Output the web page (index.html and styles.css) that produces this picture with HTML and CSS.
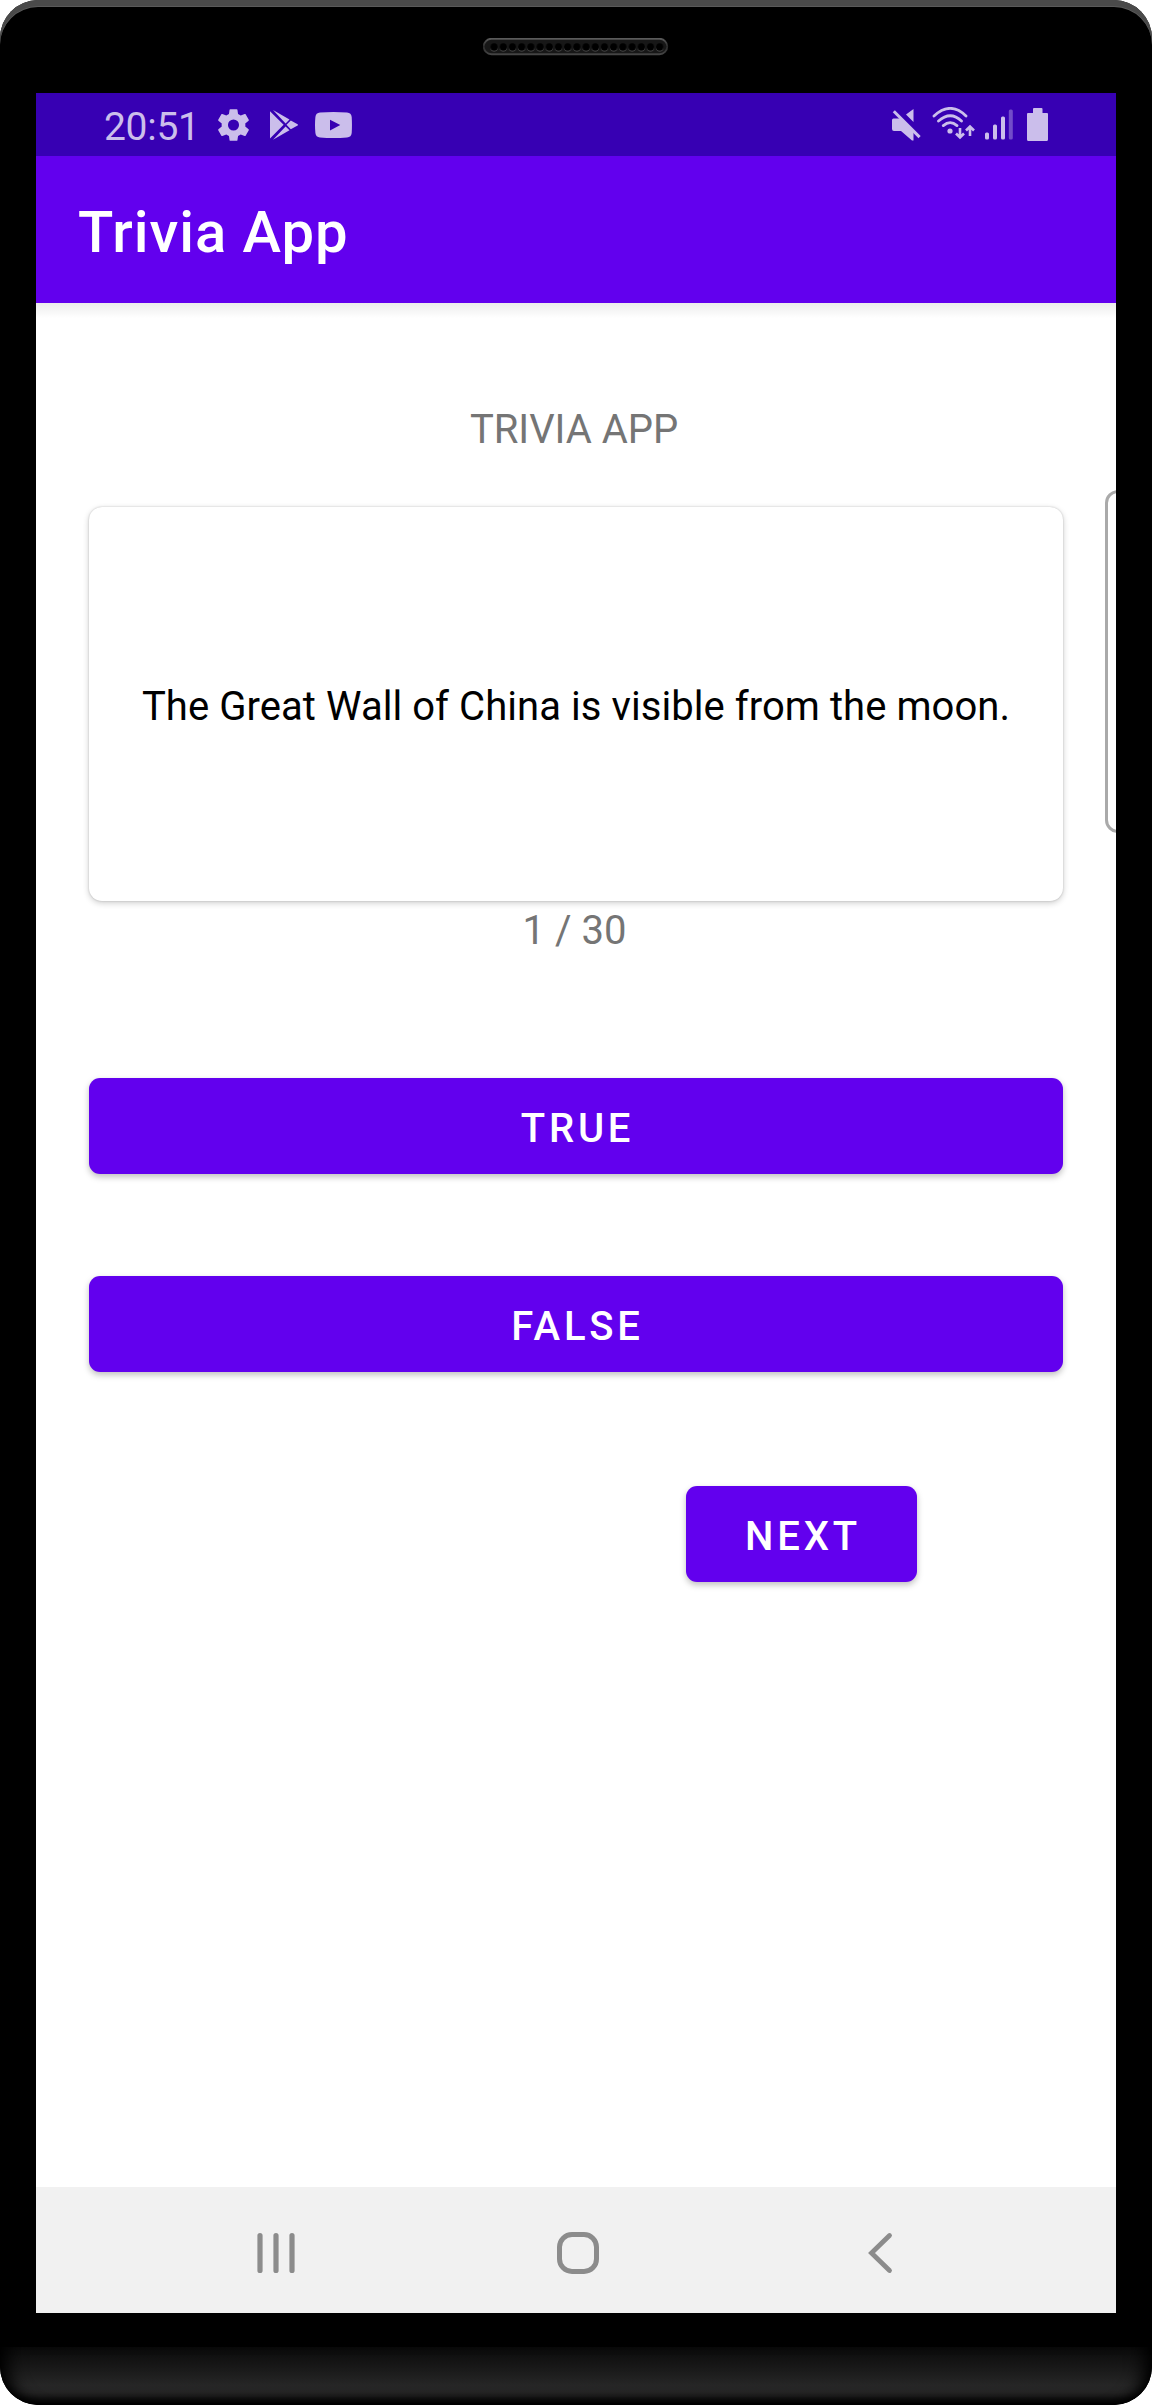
FILE: index.html
```html
<!DOCTYPE html>
<html lang="en">
<head>
<meta charset="utf-8">
<title>Trivia App</title>
<link rel="stylesheet" href="styles.css">
</head>
<body>
<div class="phone">
  <div class="bezel-top">
    <svg class="speaker" width="186" height="18" viewBox="0 0 186 18">
      <defs>
        <linearGradient id="rim" x1="0" y1="0" x2="0" y2="1">
          <stop offset="0" stop-color="#5a5a5a"/><stop offset=".5" stop-color="#2a2a2a"/><stop offset="1" stop-color="#444"/>
        </linearGradient>
        <pattern id="holes" x="6.5" y="0" width="9.2" height="18" patternUnits="userSpaceOnUse">
          <circle cx="4.6" cy="9.8" r="3.7" fill="#555"/>
          <circle cx="4.6" cy="9" r="3.7" fill="#000"/>
        </pattern>
      </defs>
      <rect x=".75" y=".75" width="183.5" height="15.5" rx="7.75" fill="#171717" stroke="url(#rim)" stroke-width="1.8"/>
      <rect x="6.5" y="2" width="174.8" height="13" fill="url(#holes)"/>
    </svg>
  </div>

  <div class="screen">
    <div class="status-bar">
      <span class="clock">20:51</span>
      <svg class="icon-settings" width="31" height="32" viewBox="2.2 2 19.6 20"><path fill-rule="evenodd" d="M19.43 12.98c.04-.32.07-.64.07-.98s-.03-.66-.07-.98l2.11-1.65c.19-.15.24-.42.12-.64l-2-3.46c-.12-.22-.39-.3-.61-.22l-2.49 1c-.52-.4-1.08-.73-1.69-.98l-.38-2.65A.488.488 0 0 0 14 2h-4c-.25 0-.46.18-.49.42l-.38 2.65c-.61.25-1.17.59-1.69.98l-2.49-1c-.23-.09-.49 0-.61.22l-2 3.46c-.13.22-.07.49.12.64l2.11 1.65c-.04.32-.07.65-.07.98s.03.66.07.98l-2.11 1.65c-.19.15-.24.42-.12.64l2 3.46c.12.22.39.3.61.22l2.49-1c.52.4 1.08.73 1.69.98l.38 2.65c.03.24.24.42.49.42h4c.25 0 .46-.18.49-.42l.38-2.65c.61-.25 1.17-.59 1.69-.98l2.49 1c.23.09.49 0 .61-.22l2-3.46c.12-.22.07-.49-.12-.64l-2.11-1.65zM12 15.5a3.5 3.5 0 1 1 0-7 3.5 3.5 0 0 1 0 7z"/></svg>
      <svg class="icon-play" width="29" height="30" viewBox="0 0 29 30"><path d="M0 1.2 13.6 14.8 0 28.4ZM3 0 19.5 9.6 15.6 13.5ZM20.8 10.5 27.6 14.2Q28.6 14.9 27.6 15.6L20.8 19.3 16.5 14.8ZM15.6 16.4 19.5 20.2 3 29.8Z"/></svg>
      <svg class="icon-video" width="37" height="26" viewBox="0 0 37 26"><path fill-rule="evenodd" d="M5 .6Q18.500-.5 32 .6Q36.400 1 36.700 5Q37.200 13 36.700 21Q36.400 25 32 25.500Q18.500 26.500 5 25.500Q.8 25 .4 21Q-.4 13 .4 5Q.8 1 5 .6ZM15 7.700V18.500L25.300 13.100Z"/></svg>
      <span class="spacer"></span>
      <svg class="icon-mute" width="30" height="32" viewBox="0 0 30 32"><path d="M21.500 0V13L14 5.500ZM1.500 9.500H9L21.500 22V31.500H20L9 22H2Q0 22 0 20V11Q0 9.500 1.500 9.500Z"/><path class="line" stroke-width="3" d="M1.800 2.300 27.600 28.100"/></svg>
      <svg class="icon-wifi" width="43" height="33" viewBox="0 0 43 33"><g class="line" stroke-width="2.800" stroke-linecap="round"><path d="M2 9Q18.500-6.200 34 9M6.500 14Q18.500 3.500 29.500 14M11.300 18.600Q18.200 12.600 25 18.600"/></g><circle cx="18" cy="24" r="2.600"/><g class="line" stroke-width="2.600"><path d="M28 21V31M24 26.500 28 30.500 32 26.500M38 29V20M34 23.500 38 19.500 42 23.500"/></g></svg>
      <svg class="icon-signal" width="28" height="31" viewBox="0 0 28 31"><rect x="0" y="23.500" width="4" height="7" rx="1.500"/><rect x="8" y="15.500" width="4" height="15" rx="1.500"/><rect x="16" y="7.500" width="4" height="23" rx="1.500"/><rect x="23.800" y=".5" width="4" height="30" rx="1.500" opacity=".4"/></svg>
      <svg class="icon-battery" width="21" height="33" viewBox="0 0 21 33"><path d="M6 1Q6 0 7 0H14.500Q15.500 0 15.500 1V5H20Q21 5 21 6V31.500Q21 33 19.500 33H1.500Q0 33 0 31.500V6Q0 5 1 5H6Z"/></svg>
    </div>

    <header class="app-bar">Trivia App</header>

    <main class="content">
      <h1 class="heading">TRIVIA APP</h1>
      <section class="card">The Great Wall of China is visible from the moon.</section>
      <p class="counter">1 / 30</p>
      <div class="answers">
        <button class="button">TRUE</button>
        <button class="button">FALSE</button>
      </div>
      <button class="button button-next">NEXT</button>
      <span class="edge-panel"></span>
    </main>

    <nav class="nav-bar">
      <svg class="nav-recents" width="40" height="42" viewBox="0 0 40 42"><path stroke-width="5.200" stroke-linecap="round" d="M4 3.600V38.400M20 3.600V38.400M36 3.600V38.400"/></svg>
      <svg class="nav-home" width="42" height="42" viewBox="0 0 42 42"><rect x="2.500" y="2.500" width="37" height="37" rx="12.500" stroke-width="5"/></svg>
      <svg class="nav-back" width="25" height="42" viewBox="0 0 25 42"><path stroke-width="4.800" stroke-linecap="round" d="M21.500 3.500 3.500 21 21.500 38.500"/></svg>
    </nav>
  </div>

  <div class="chin"></div>
</div>
</body>
</html>
```

FILE: styles.css
```css
* {
  box-sizing: border-box;
}

body {
  margin: 0;
  background: #fff;
  font-family: Roboto, "Noto Sans", sans-serif;
}

.phone {
  display: flex;
  flex-direction: column;
  width: 1152px;
  height: 2405px;
  background: #000;
  border-radius: 38px;
  overflow: hidden;
}

.bezel-top {
  display: flex;
  justify-content: center;
  height: 93px;
  flex: none;
  padding-top: 38px;
  border-radius: 38px 38px 0 0;
  box-shadow: inset 0 6px 0 #4a4a4a, inset 0 7px 0 #5a5a5a;
}

.screen {
  display: flex;
  flex-direction: column;
  width: 1080px;
  height: 2220px;
  flex: none;
  margin: 0 36px;
  background: #fff;
}

.status-bar {
  display: flex;
  align-items: flex-start;
  height: 63px;
  flex: none;
  padding: 15px 68px 0 68px;
  background: #3700b3;
  color: #cbbeeb;
  fill: #cbbeeb;
}

.status-bar .line {
  fill: none;
  stroke: #cbbeeb;
}

.clock {
  width: 114px;
  flex: none;
  font-size: 39px;
  line-height: 38px;
  letter-spacing: -.3px;
}

.icon-settings {
  margin-top: 1px;
}

.icon-play {
  margin: 2px 0 0 21px;
}

.icon-video {
  margin: 4px 0 0 16px;
}

.spacer {
  flex: 1;
}

.icon-mute {
  margin-top: 1px;
}

.icon-wifi {
  margin: -1px 0 0 10px;
}

.icon-signal {
  margin: 1px 0 0 10px;
}

.icon-battery {
  margin-left: 14px;
}

.app-bar {
  height: 147px;
  flex: none;
  padding: 6px 42px 0;
  background: #6200ee;
  color: #fff;
  font-size: 58px;
  font-weight: 500;
  letter-spacing: .95px;
  line-height: 141px;
}

.content {
  position: relative;
  flex: 1;
  padding: 103px 53px 0;
  overflow: hidden;
  background: linear-gradient(#ececec, #fff 15px);
}

.heading {
  margin: 0 4px 53px 0;
  color: #757575;
  font-size: 40px;
  font-weight: 400;
  letter-spacing: -.05px;
  line-height: 48px;
  text-align: center;
}

.card {
  display: flex;
  align-items: center;
  justify-content: center;
  height: 394px;
  padding-top: 5px;
  border-radius: 13px;
  background: #fff;
  box-shadow: 0 0 2px rgba(0, 0, 0, .2), 0 2px 6px rgba(0, 0, 0, .2);
  color: #000;
  font-size: 40px;
  letter-spacing: .06px;
  white-space: nowrap;
}

.counter {
  margin: 2px 3px 0 0;
  color: #757575;
  font-size: 40px;
  line-height: 56px;
  text-align: center;
}

.answers {
  display: grid;
  gap: 102px;
  margin-top: 119px;
}

.button {
  height: 96px;
  padding: 6px 0 0 3px;
  border: 0;
  border-radius: 11px;
  background: #6200ee;
  box-shadow: 0 3px 6px rgba(0, 0, 0, .25);
  color: #fff;
  font: 500 40px/90px Roboto, "Noto Sans", sans-serif;
  letter-spacing: 3.8px;
  text-align: center;
}

.button-next {
  display: block;
  width: 231px;
  margin: 114px 0 0 597px;
}

.edge-panel {
  position: absolute;
  top: 187px;
  right: -15px;
  width: 26px;
  height: 343px;
  border: 3px solid #aaa;
  border-radius: 13px;
}

.nav-bar {
  display: flex;
  height: 126px;
  flex: none;
  padding: 45px 0 0 220px;
  background: #f1f1f1;
  fill: none;
  stroke: #8c8c8c;
}

.nav-home {
  margin-left: 261px;
}

.nav-back {
  margin-left: 269px;
}

.chin {
  height: 58px;
  margin-top: 34px;
  border-radius: 0 0 38px 38px;
  background: linear-gradient(#0b0b0b, #161616 30%, #262626 66%, #242424 78%, #0c0c0c 96%, #000);
  box-shadow: inset 22px 0 18px -14px #000, inset -22px 0 18px -14px #000, inset 0 -5px 8px -2px #000;
}
```
